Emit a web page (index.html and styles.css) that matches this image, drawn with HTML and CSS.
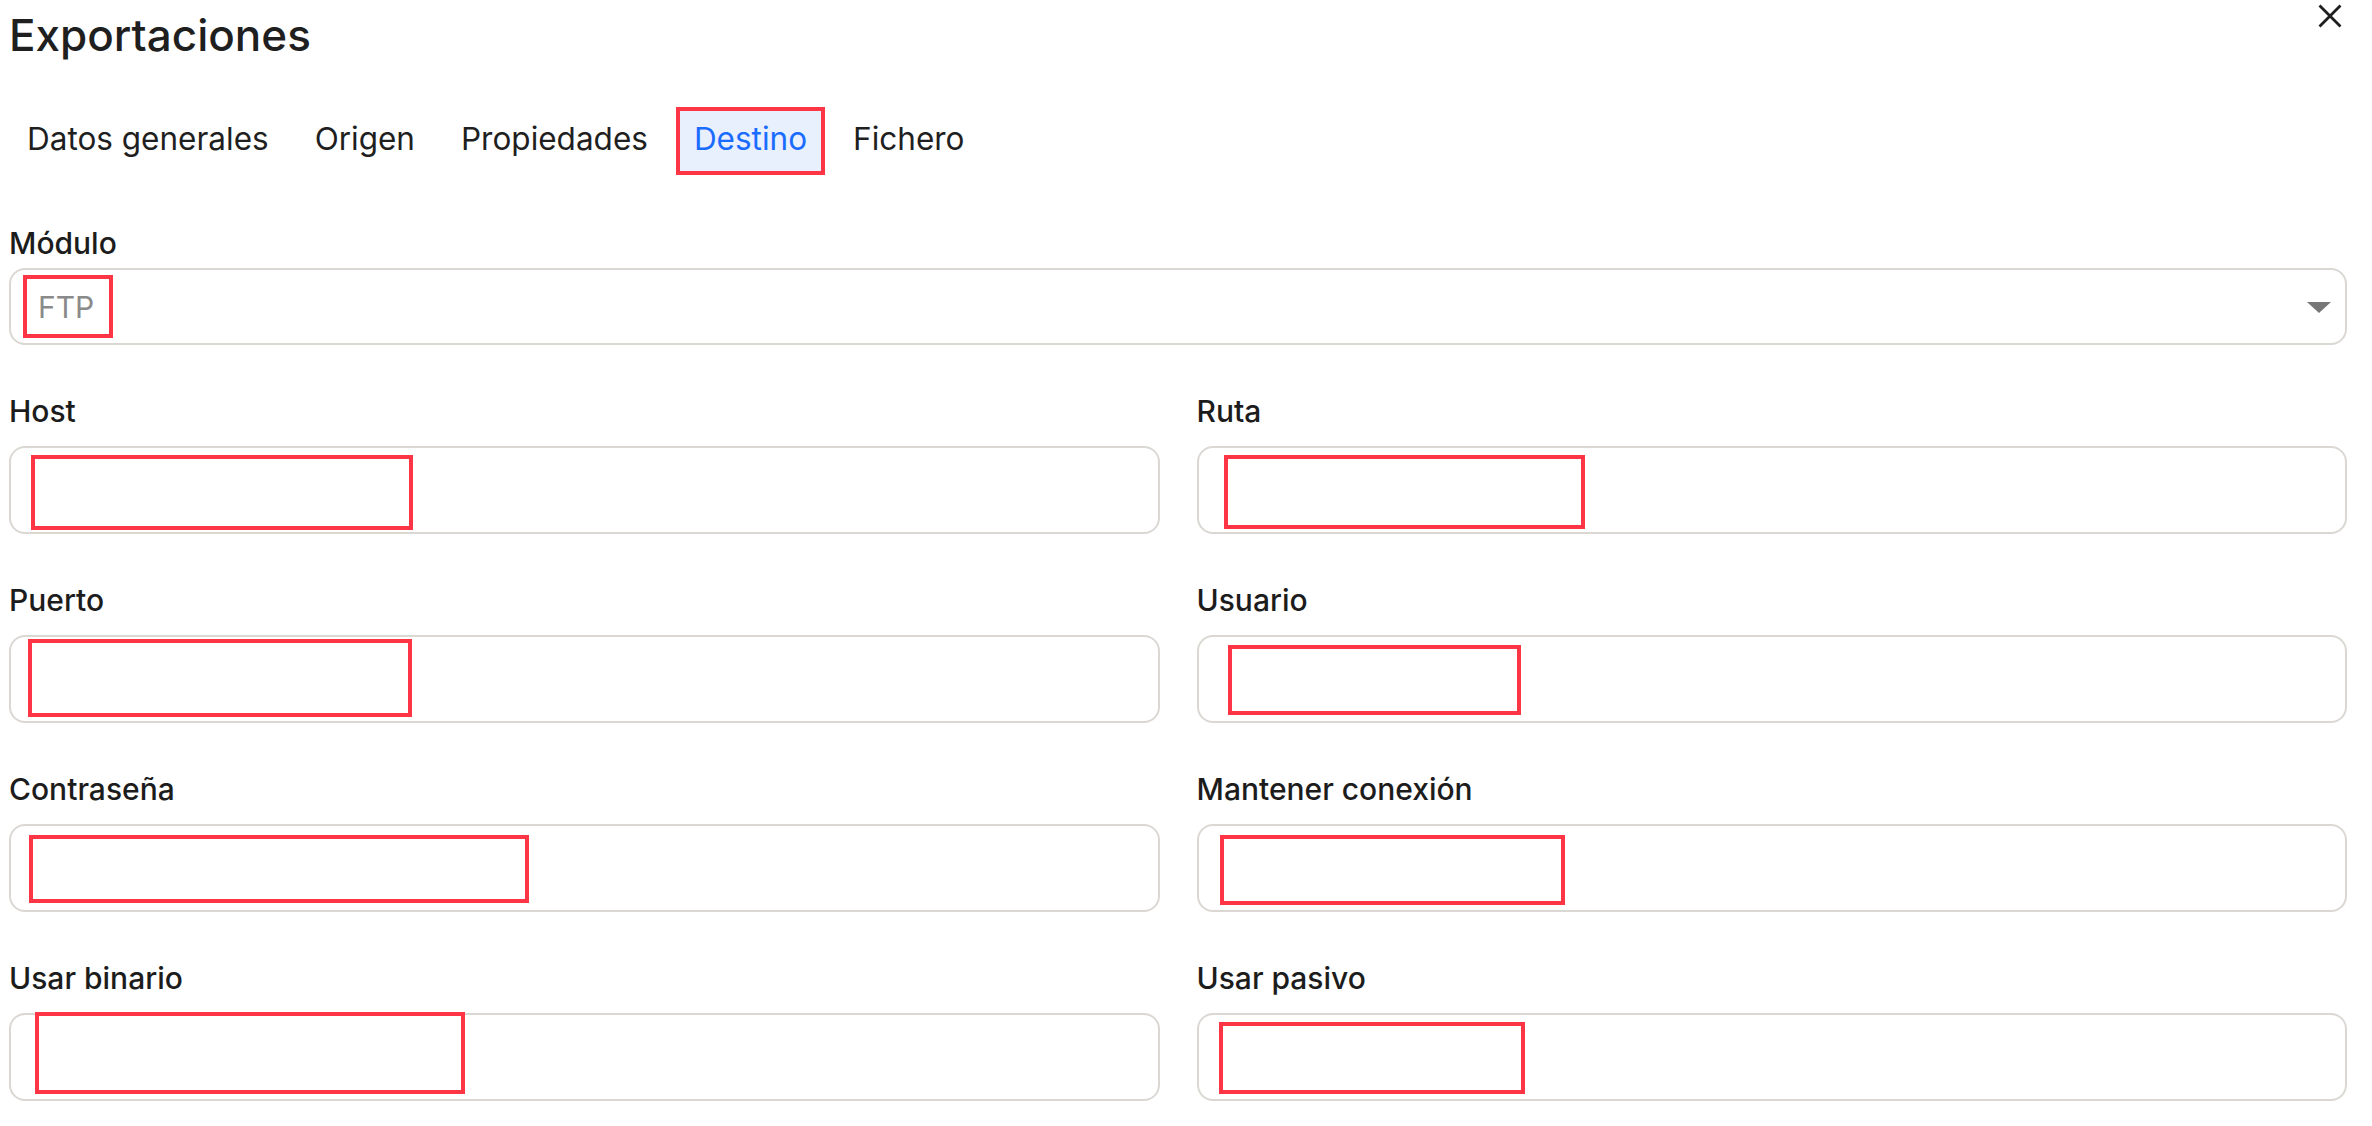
FILE: index.html
```html
<!DOCTYPE html>
<html lang="es">
<head>
    <meta charset="UTF-8">
    <meta name="viewport" content="width=device-width, initial-scale=1">
    <title>Exportaciones</title>
    <link rel="stylesheet" href="styles.css">
</head>
<body>
<div class="dialog">
    <div class="dialog-header">
        <h1 class="dialog-title">Exportaciones</h1>
        <button class="dialog-close" type="button" aria-label="Cerrar">
            <svg width="24" height="24" viewBox="0 0 24 24">
                <path d="M1.5 1.5 L22.5 22.5 M22.5 1.5 L1.5 22.5" stroke="#1e1e1e" stroke-width="2.8" fill="none"/>
            </svg>
        </button>
    </div>

    <div class="tabs">
        <div class="tab">Datos generales</div>
        <div class="tab">Origen</div>
        <div class="tab">Propiedades</div>
        <div class="tab tab-active">Destino</div>
        <div class="tab">Fichero</div>
    </div>

    <div class="field field-module">
        <div class="field-label">Módulo</div>
        <div class="select-box">
            <span class="select-value">FTP</span>
            <svg class="select-arrow" width="24" height="11" viewBox="0 0 24 11">
                <path d="M0 0 L24 0 L12 11 Z" fill="#777777"/>
            </svg>
        </div>
    </div>

    <div class="field-grid">
        <div class="field">
            <div class="field-label">Host</div>
            <div class="input-box"><div class="mark mark-host"></div></div>
        </div>
        <div class="field">
            <div class="field-label">Ruta</div>
            <div class="input-box"><div class="mark mark-ruta"></div></div>
        </div>
        <div class="field">
            <div class="field-label">Puerto</div>
            <div class="input-box"><div class="mark mark-puerto"></div></div>
        </div>
        <div class="field">
            <div class="field-label">Usuario</div>
            <div class="input-box"><div class="mark mark-usuario"></div></div>
        </div>
        <div class="field">
            <div class="field-label">Contraseña</div>
            <div class="input-box"><div class="mark mark-password"></div></div>
        </div>
        <div class="field">
            <div class="field-label">Mantener conexión</div>
            <div class="input-box"><div class="mark mark-keepalive"></div></div>
        </div>
        <div class="field">
            <div class="field-label">Usar binario</div>
            <div class="input-box"><div class="mark mark-binary"></div></div>
        </div>
        <div class="field">
            <div class="field-label">Usar pasivo</div>
            <div class="input-box"><div class="mark mark-passive"></div></div>
        </div>
    </div>
</div>
</body>
</html>
```

FILE: styles.css
```css
* {
    margin: 0;
    padding: 0;
    box-sizing: border-box;
}

html,
body {
    width: 100%;
    height: 100%;
    background: #ffffff;
}

body {
    font-family: Inter, "Noto Sans", sans-serif;
    color: #1f1f1f;
    overflow: hidden;
}

.dialog {
    padding: 4px 25px 0 9px;
}

.dialog-header {
    display: flex;
    justify-content: space-between;
    align-items: flex-start;
    height: 55px;
}

.dialog-title {
    margin-top: 5px;
    font-size: 44px;
    line-height: 52px;
    font-weight: 500;
    color: #1f1f1f;
}

.dialog-close {
    width: 24px;
    height: 24px;
    margin-right: 5px;
    border: none;
    background: none;
    cursor: pointer;
    display: flex;
}

.tabs {
    display: flex;
    gap: 10px;
    margin-top: 48px;
}

.tab {
    position: relative;
    height: 68px;
    padding: 0 18px 4px;
    font-size: 31.5px;
    line-height: 64px;
    color: #1f1f1f;
    border-radius: 8px;
}

.tab-active {
    color: #1a6bff;
    background: #e8effd;
}

.tab-active::after {
    content: "";
    position: absolute;
    top: 0;
    right: 0;
    bottom: 0;
    left: 0;
    border: 4px solid #fe3545;
}

.field-label {
    font-size: 30px;
    line-height: 36px;
    font-weight: 500;
    color: #1c1c1c;
}

.field-module {
    margin-top: 50px;
}

.field-module .field-label {
    margin-bottom: 7px;
}

.select-box {
    height: 77px;
    border: 2px solid #dbd8d4;
    border-radius: 16px;
    display: flex;
    align-items: center;
    justify-content: space-between;
    padding: 0 14px 0 12px;
}

.select-value {
    border: 4px solid #fe3545;
    padding: 10px 15px 9px 11px;
    font-size: 30px;
    line-height: 36px;
    color: #8a8a8a;
}

.select-arrow {
    margin-top: 2px;
}

.field-grid {
    display: grid;
    grid-template-columns: 1fr 1fr;
    column-gap: 37px;
    row-gap: 48px;
    margin-top: 48px;
}

.field-grid .field-label {
    margin-bottom: 17px;
}

.input-box {
    height: 88px;
    border: 2px solid #dbd8d4;
    border-radius: 16px;
    display: flex;
    align-items: flex-start;
}

.mark {
    border: 4px solid #fe3545;
    flex: none;
}

.mark-host {
    width: 382px;
    height: 75px;
    margin: 7px 0 0 20px;
}

.mark-ruta {
    width: 361px;
    height: 74px;
    margin: 7px 0 0 25px;
}

.mark-puerto {
    width: 384px;
    height: 78px;
    margin: 2px 0 0 17px;
}

.mark-usuario {
    width: 293px;
    height: 70px;
    margin: 8px 0 0 29px;
}

.mark-password {
    width: 500px;
    height: 68px;
    margin: 9px 0 0 18px;
}

.mark-keepalive {
    width: 345px;
    height: 70px;
    margin: 9px 0 0 21px;
}

.mark-binary {
    width: 430px;
    height: 82px;
    margin: -3px 0 0 24px;
}

.mark-passive {
    width: 306px;
    height: 72px;
    margin: 7px 0 0 20px;
}
```
